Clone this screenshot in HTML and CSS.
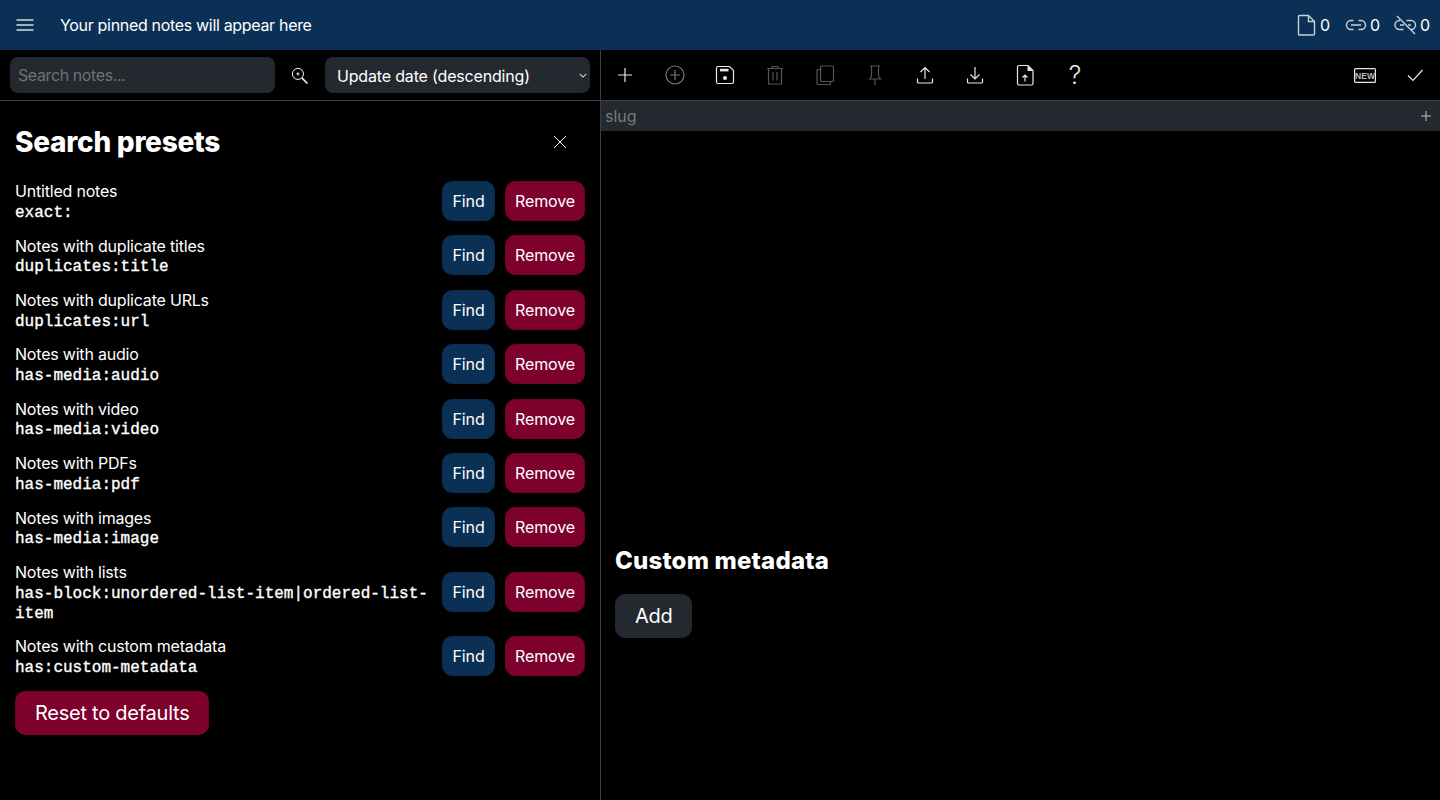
FILE: index.html
```html
<!DOCTYPE html>
<html lang="en">
<head>
<meta charset="utf-8">
<title>Notes</title>
<link rel="stylesheet" href="styles.css">
</head>
<body>
<header class="app-header">
  <button class="icon-btn menu-btn" aria-label="Menu">
    <svg class="icon menu-icon" viewBox="0 0 24 24"><path d="M3.500 7h17M3.500 12h17M3.500 17h17"/></svg>
  </button>
  <div class="pinned">Your pinned notes will appear here</div>
  <div class="stats">
    <span class="stat"><svg class="icon stat-icon" viewBox="0 0 24 24"><path d="M5.500 2.500h9l6 6V21a1 1 0 0 1-1 1h-14a1 1 0 0 1-1-1V3.500a1 1 0 0 1 1-1z M14.500 2.500v6h6"/></svg>0</span>
    <span class="stat"><svg class="icon stat-icon" viewBox="0 0 24 24"><path d="M9.500 7.500H7a4.500 4.500 0 0 0 0 9h2.500M14.500 7.500H17a4.500 4.500 0 0 1 0 9h-2.500M7 12h10"/></svg>0</span>
    <span class="stat"><svg class="icon stat-icon" viewBox="0 0 24 24"><path d="M6 7.500H5.500a4.500 4.500 0 0 0 0 9h4M12.500 7.500H17a4.500 4.500 0 0 1 0 9h-1M6 12h4M14 12h3M3 3l18 18"/></svg>0</span>
  </div>
</header>
<main class="app-main">
  <section class="left">
    <div class="search-bar">
      <input class="search-input" type="text" placeholder="Search notes...">
      <button class="icon-btn search-btn" aria-label="Search">
        <svg class="icon" viewBox="0 0 24 24"><circle cx="10" cy="10" r="7"/><path d="M15 15L22 22" stroke-width="1.800"/><path d="M10 8v4M8 10h4" stroke-width="1.200"/></svg>
      </button>
      <div class="sort">
        <span>Update date (descending)</span>
        <svg class="chevron" viewBox="0 0 10 6"><path d="M1 1l4 4 4-4"/></svg>
      </div>
    </div>
    <div class="presets">
      <div class="presets-head">
        <h1 class="presets-title">Search presets</h1>
        <button class="icon-btn close-btn" aria-label="Close">
          <svg class="icon" viewBox="0 0 24 24"><path d="M5 5l14 14M19 5L5 19"/></svg>
        </button>
      </div>
      <div class="preset-list">
        <div class="preset"><div class="preset-text"><div class="preset-name">Untitled notes</div><code class="preset-query">exact:</code></div><button class="btn find">Find</button><button class="btn remove">Remove</button></div>
        <div class="preset"><div class="preset-text"><div class="preset-name">Notes with duplicate titles</div><code class="preset-query">duplicates:title</code></div><button class="btn find">Find</button><button class="btn remove">Remove</button></div>
        <div class="preset"><div class="preset-text"><div class="preset-name">Notes with duplicate URLs</div><code class="preset-query">duplicates:url</code></div><button class="btn find">Find</button><button class="btn remove">Remove</button></div>
        <div class="preset"><div class="preset-text"><div class="preset-name">Notes with audio</div><code class="preset-query">has-media:audio</code></div><button class="btn find">Find</button><button class="btn remove">Remove</button></div>
        <div class="preset"><div class="preset-text"><div class="preset-name">Notes with video</div><code class="preset-query">has-media:video</code></div><button class="btn find">Find</button><button class="btn remove">Remove</button></div>
        <div class="preset"><div class="preset-text"><div class="preset-name">Notes with PDFs</div><code class="preset-query">has-media:pdf</code></div><button class="btn find">Find</button><button class="btn remove">Remove</button></div>
        <div class="preset"><div class="preset-text"><div class="preset-name">Notes with images</div><code class="preset-query">has-media:image</code></div><button class="btn find">Find</button><button class="btn remove">Remove</button></div>
        <div class="preset"><div class="preset-text"><div class="preset-name">Notes with lists</div><code class="preset-query">has-block:unordered-list-item|ordered-list-item</code></div><button class="btn find">Find</button><button class="btn remove">Remove</button></div>
        <div class="preset"><div class="preset-text"><div class="preset-name">Notes with custom metadata</div><code class="preset-query">has:custom-metadata</code></div><button class="btn find">Find</button><button class="btn remove">Remove</button></div>
        <div><button class="btn large reset">Reset to defaults</button></div>
      </div>
    </div>
  </section>
  <section class="right">
    <div class="toolbar">
      <button class="tool" aria-label="New"><svg class="icon" viewBox="0 0 24 24"><path d="M12 5v14M5 12h14"/></svg></button>
      <button class="tool dim" aria-label="Add"><svg class="icon" viewBox="0 0 24 24"><circle cx="12" cy="12" r="9"/><path d="M12 7v10M7 12h10"/></svg></button>
      <button class="tool" aria-label="Save"><svg class="icon" viewBox="0 0 24 24"><path d="M5 3.500h11.500l4 4V19a1.500 1.500 0 0 1-1.500 1.500H5A1.500 1.500 0 0 1 3.500 19V5A1.500 1.500 0 0 1 5 3.500z"/><rect class="solid" x="7" y="5.800" width="8.500" height="2.600"/><circle class="solid" cx="12" cy="15" r="2"/></svg></button>
      <button class="tool dimmer" aria-label="Delete"><svg class="icon" viewBox="0 0 24 24"><path d="M4 5.500h16M9 5.500V3.500h6v2M5.500 5.500V21h13V5.500M10 9v8.500M14 9v8.500"/></svg></button>
      <button class="tool dimmer" aria-label="Duplicate"><svg class="icon" viewBox="0 0 24 24"><path d="M8.500 3h11a1 1 0 0 1 1 1v13.500a1 1 0 0 1-1 1h-11a1 1 0 0 1-1-1V4a1 1 0 0 1 1-1zM7.500 6.500H5a1 1 0 0 0-1 1V20.500a1 1 0 0 0 1 1h11.500a1 1 0 0 0 1-1v-2"/></svg></button>
      <button class="tool dimmer" aria-label="Pin"><svg class="icon" viewBox="0 0 24 24"><path d="M7 3h10M8.500 3v10.500L6.500 16h11l-2-2.500V3M12 16v6"/></svg></button>
      <button class="tool" aria-label="Upload"><svg class="icon" viewBox="0 0 24 24"><path d="M12 16V4.500M7.500 9L12 4.500 16.500 9M4.500 15.500V19a1 1 0 0 0 1 1h13a1 1 0 0 0 1-1v-3.500"/></svg></button>
      <button class="tool" aria-label="Download"><svg class="icon" viewBox="0 0 24 24"><path d="M12 4v12M7.500 11.500L12 16l4.500-4.500M4.500 15.500V19a1 1 0 0 0 1 1h13a1 1 0 0 0 1-1v-3.500"/></svg></button>
      <button class="tool" aria-label="Import"><svg class="icon" viewBox="0 0 24 24"><path d="M6 2.500h9l5 5V20.500a1.500 1.500 0 0 1-1.500 1.500H6a1.500 1.500 0 0 1-1.500-1.500V4A1.500 1.500 0 0 1 6 2.500z"/><path class="solid" d="M14.500 2.500l5.500 5.500h-5.500z"/><path d="M12 18.500v-6.500M9.500 14.500L12 12l2.500 2.500"/></svg></button>
      <button class="tool help" aria-label="Help">?</button>
      <div class="spacer"></div>
      <button class="tool" aria-label="New badge"><svg class="new-icon" viewBox="0 0 22 15"><rect x="0.600" y="0.600" width="20.800" height="13.800" rx="1"/><text x="11" y="10.700" text-anchor="middle" class="new-text">NEW</text></svg></button>
      <button class="tool" aria-label="Done"><svg class="icon" viewBox="0 0 24 24"><path d="M5 12.500l5 5L19.500 7"/></svg></button>
    </div>
    <div class="slug-bar">
      <span class="slug">slug</span>
      <svg class="icon slug-add" viewBox="0 0 24 24"><path d="M12 2v20M2 12h20"/></svg>
    </div>
    <div class="editor"></div>
    <div class="metadata">
      <h2 class="metadata-title">Custom metadata</h2>
      <button class="btn large neutral">Add</button>
    </div>
  </section>
</main>
</body>
</html>
```
FILE: styles.css
```css
* { box-sizing: border-box; }
html, body { margin: 0; height: 100%; }
body {
  background: #000;
  color: #fff;
  font-family: Inter, "Liberation Sans", sans-serif;
  font-size: 16px;
  overflow: hidden;
}
button { font-family: inherit; color: inherit; cursor: pointer; }
.icon {
  display: block;
  width: 24px;
  height: 24px;
  fill: none;
  stroke: currentColor;
  stroke-width: 1.2;
}
.icon .solid { fill: currentColor; stroke: none; }
.icon-btn { background: none; border: 0; padding: 0; display: flex; align-items: center; justify-content: center; }

.app-header {
  height: 50px;
  background: #0a3055;
  display: flex;
  align-items: center;
}
.menu-btn { width: 50px; height: 50px; color: #d5dce4; }
.menu-icon { stroke-width: 1.6; }
.pinned { margin-left: 10px; font-size: 16px; letter-spacing: -0.32px; }
.stats { margin-left: auto; display: flex; padding-right: 10px; }
.stat { display: flex; align-items: center; width: 50px; justify-content: flex-end; font-size: 16px; gap: 2px; }
.stat-icon { color: #c6d0da; stroke-width: 1.4; }

.app-main { display: flex; height: 750px; }
.left { width: 600px; flex: none; display: flex; flex-direction: column; }
.search-bar {
  height: 51px;
  padding: 7px 10px;
  border-bottom: 1px solid #3a3f47;
  display: flex;
  align-items: flex-start;
}
.search-input {
  width: 265px;
  height: 36px;
  background: #24282f;
  border: 0;
  border-radius: 8px;
  padding: 0 8px;
  color: #fff;
  font: inherit;
  letter-spacing: -0.4px;
  outline: none;
}
.search-input::placeholder { color: #6f7276; opacity: 1; }
.search-btn { width: 50px; height: 36px; padding-right: 1px; }
.search-btn .icon { width: 19px; height: 19px; }
.sort {
  width: 265px;
  height: 36px;
  background: #24282f;
  border-radius: 8px;
  padding: 1px 3px 0 12px;
  display: flex;
  align-items: center;
  justify-content: space-between;
  letter-spacing: -0.17px;
}
.chevron { width: 8px; height: 5px; fill: none; stroke: #d8d8d8; stroke-width: 1.3; }

.presets { padding: 0 15px; }
.presets-head {
  height: 80px;
  padding-top: 1px;
  display: flex;
  align-items: center;
  justify-content: space-between;
}
.presets-title { margin: 0; font-size: 28px; font-weight: 800; letter-spacing: -0.26px; }
.close-btn { width: 50px; height: 50px; }
.close-btn .icon { width: 20px; height: 20px; }
.preset-list { display: flex; flex-direction: column; gap: 14.4px; }
.preset { display: flex; align-items: center; gap: 10px; }
.preset-text { flex: 1; min-width: 0; padding-top: 0.3px; margin-bottom: -0.3px; }
.preset-name { line-height: 20px; letter-spacing: -0.2px; }
.preset-query {
  display: block;
  font-family: "Liberation Mono", monospace;
  font-size: 16px;
  font-weight: 400;
  -webkit-text-stroke: 0.35px #fff;
  line-height: 20px;
  padding-top: 1.5px;
  margin-bottom: -1.5px;
  overflow-wrap: anywhere;
}
.btn {
  height: 40px;
  padding: 0 9px;
  border: 1px solid transparent;
  border-radius: 10px;
  font-size: 16px;
  flex: none;
  color: #fff;
  letter-spacing: -0.1px;
}
.find { background: #0a3055; border-color: #0a2b4c; width: 53px; }
.remove { background: #7d002d; border-color: #720029; width: 80px; }
.btn.large { height: 44px; padding: 0 19px; font-size: 20px; }
.reset { background: #7d002d; border-color: #720029; letter-spacing: -0.25px; }
.btn.neutral { background: #24282f; border-color: #24282f; letter-spacing: -0.3px; }

.right { flex: 1; border-left: 1px solid #3a3f47; display: flex; flex-direction: column; min-width: 0; }
.toolbar { height: 50px; display: flex; flex: none; margin-left: -1px; }
.tool {
  width: 50px;
  height: 50px;
  background: none;
  border: 0;
  padding: 0;
  display: flex;
  align-items: center;
  justify-content: center;
  color: #e8e8e8;
}
.tool.dim { color: #777; }
.tool.dimmer { color: #555; }
.help { font-size: 25px; font-weight: 300; }
.spacer { flex: 1; }
.new-icon { display: block; width: 22px; height: 15px; fill: none; stroke: #e8e8e8; stroke-width: 1.2; }
.new-text { font-family: "Liberation Sans", sans-serif; font-size: 8.500px; font-weight: 700; fill: #bbb; stroke: none; }
.slug-bar {
  height: 31px;
  background: #24282f;
  border-top: 1px solid #3a3f47;
  display: flex;
  align-items: center;
  justify-content: space-between;
  padding: 0 8px 0 4px;
  color: #777a7e;
  flex: none;
}
.slug-add { width: 12px; height: 12px; color: #c0c0c0; stroke-width: 2; }
.editor { height: 410px; flex: none; }
.metadata { padding: 0 14px; }
.metadata-title { margin: 0 0 13px; font-size: 24px; font-weight: 800; letter-spacing: 0.2px; line-height: 40px; }
```
